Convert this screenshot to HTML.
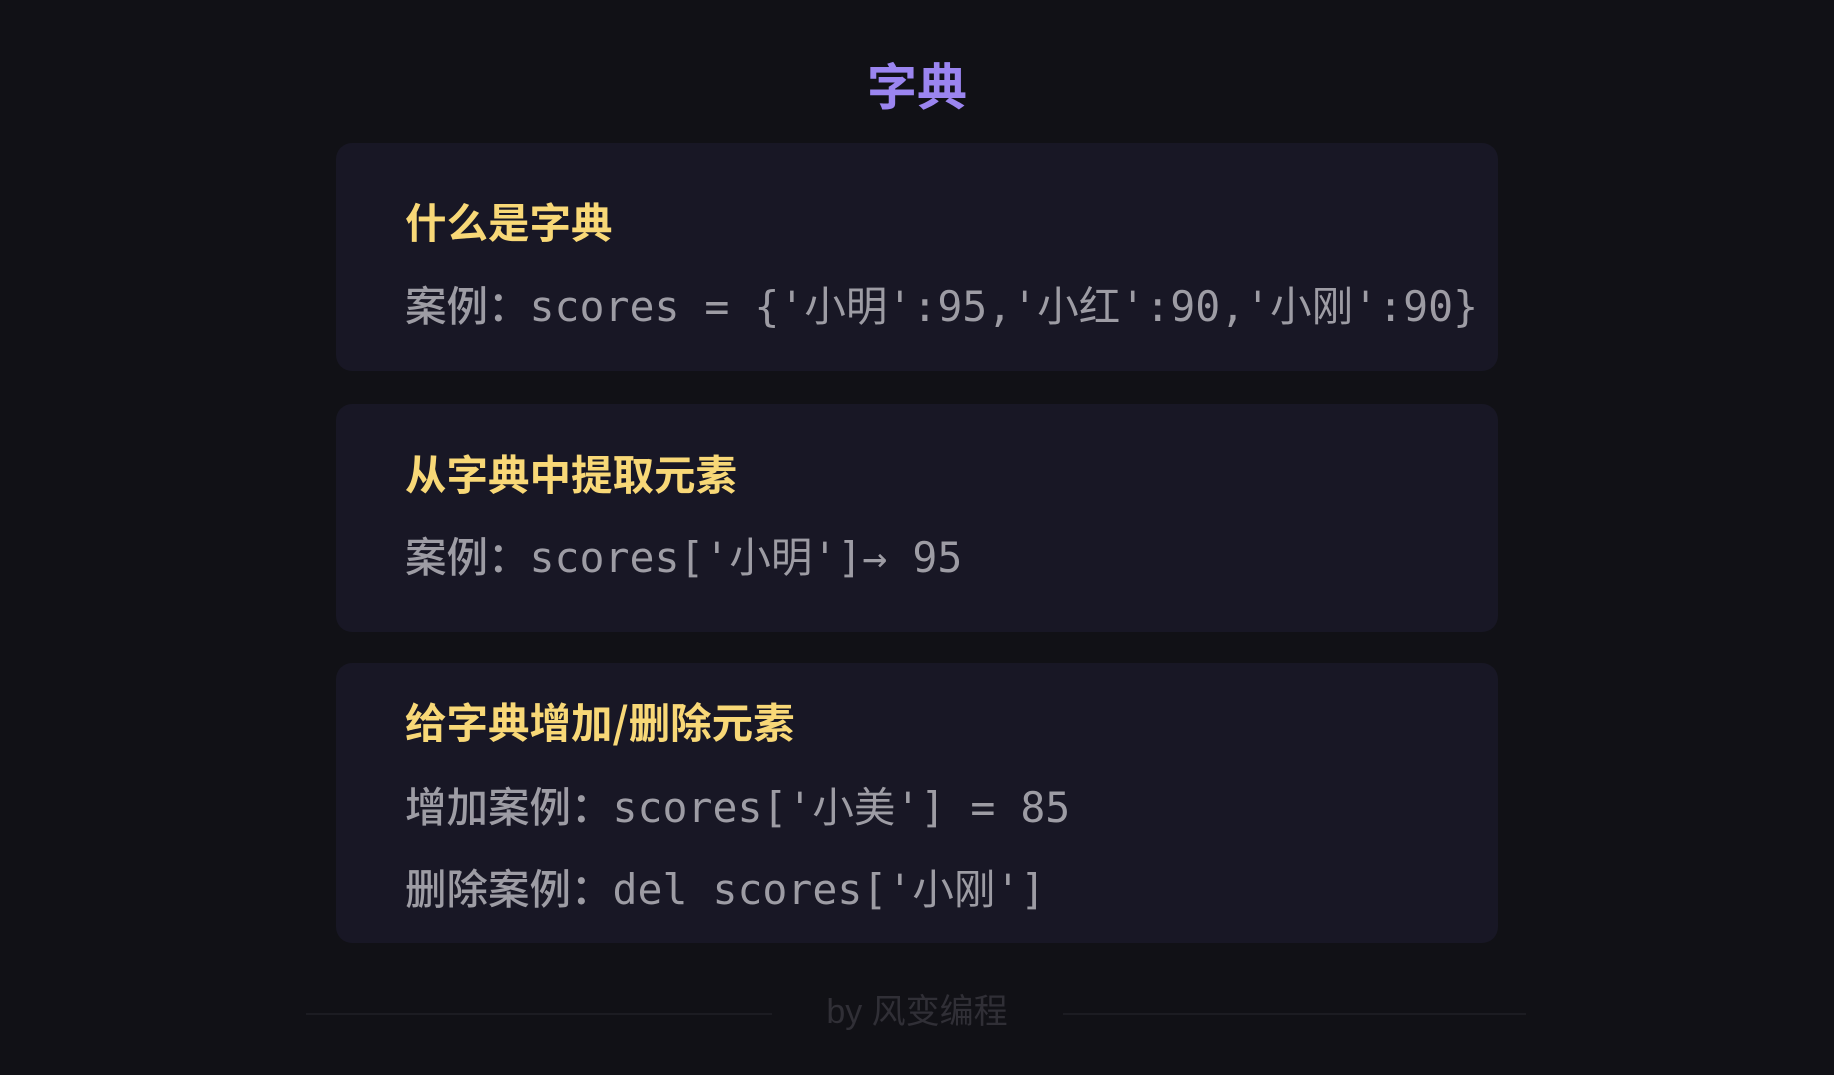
<!DOCTYPE html>
<html><head><meta charset="utf-8"><style>
html,body{margin:0;padding:0;background:#111116;width:1834px;height:1075px;overflow:hidden;font-family:"Liberation Sans","Noto Sans CJK SC",sans-serif;}
.title{position:absolute;left:0;width:1834px;top:58px;text-align:center;color:#9b85f0;font-size:50px;font-weight:bold;line-height:60px;}
.card{position:absolute;left:336px;width:1162px;background:#181725;border-radius:16px;}
.h{position:absolute;left:69px;color:#f8d877;font-size:41.5px;font-weight:bold;line-height:50px;white-space:nowrap;}
.h i{font-style:normal;font-family:"Noto Sans CJK SC",sans-serif;}
.c{position:absolute;left:69px;color:#9d9ca4;font-size:41.5px;line-height:50px;white-space:nowrap;font-family:"DejaVu Sans Mono","Noto Sans CJK SC",monospace;}
.c b{font-family:"Noto Sans CJK SC",sans-serif;font-weight:500;}
.foot{position:absolute;left:0;width:1834px;top:990px;text-align:center;color:#302f36;font-size:34px;line-height:44px;}
.line{position:absolute;top:1013px;height:2px;background:#1c1c22;}
</style></head><body>
<div class="title">字典</div>
<div class="card" style="top:143px;height:228px">
<div class="h" style="top:56px">什么是字典</div>
<div class="c" style="top:135px"><b>案例：</b>scores = {'小明':95,'小红':90,'小刚':90}</div>
</div>
<div class="card" style="top:404px;height:228px">
<div class="h" style="top:47px">从字典中提取元素</div>
<div class="c" style="top:125px"><b>案例：</b>scores['小明']→ 95</div>
</div>
<div class="card" style="top:663px;height:280px">
<div class="h" style="top:32px">给字典增加<i>/</i>删除元素</div>
<div class="c" style="top:116px"><b>增加案例：</b>scores['小美'] = 85</div>
<div class="c" style="top:198px"><b>删除案例：</b>del scores['小刚']</div>
</div>
<div class="line" style="left:306px;width:466px"></div>
<div class="line" style="left:1063px;width:463px"></div>
<div class="foot">by 风变编程</div>
</body></html>
